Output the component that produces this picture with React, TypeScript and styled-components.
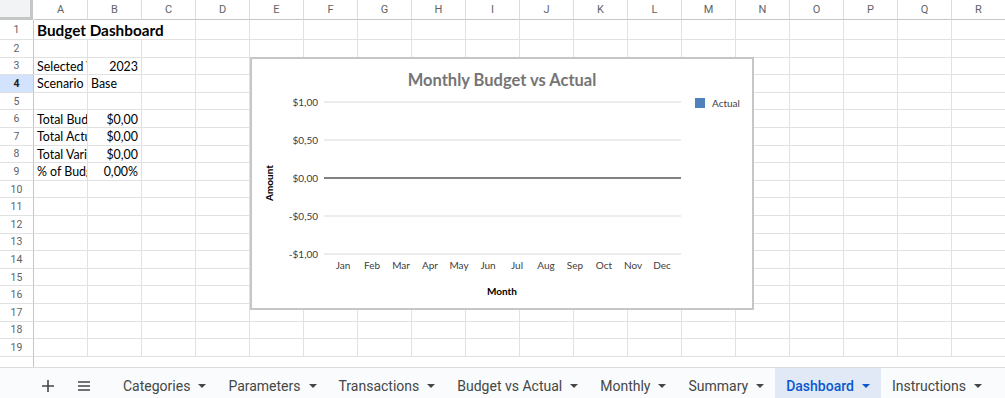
import React from "react";
import styled, { createGlobalStyle, css } from "styled-components";

const GlobalStyle = createGlobalStyle`
  html, body {
    margin: 0;
    padding: 0;
    background: #ffffff;
  }
  body {
    font-family: Roboto, "Liberation Sans", sans-serif;
    overflow: hidden;
  }
`;

const COLS = ["A", "B", "C", "D", "E", "F", "G", "H", "I", "J", "K", "L", "M", "N", "O", "P", "Q", "R"];
const MONTHS = ["Jan", "Feb", "Mar", "Apr", "May", "Jun", "Jul", "Aug", "Sep", "Oct", "Nov", "Dec"];
const TABS = ["Categories", "Parameters", "Transactions", "Budget vs Actual", "Monthly", "Summary", "Dashboard", "Instructions"];

type CellData = { text: string; align?: "left" | "right"; bold?: boolean; span?: number };

// sheet contents, keyed by row then column index
const DATA: Record<number, Record<number, CellData>> = {
  1: { 0: { text: "Budget Dashboard", bold: true, span: 3 } },
  3: { 0: { text: "Selected Year" }, 1: { text: "2023", align: "right" } },
  4: { 0: { text: "Scenario" }, 1: { text: "Base" } },
  6: { 0: { text: "Total Budget" }, 1: { text: "$0,00", align: "right" } },
  7: { 0: { text: "Total Actual" }, 1: { text: "$0,00", align: "right" } },
  8: { 0: { text: "Total Variance" }, 1: { text: "$0,00", align: "right" } },
  9: { 0: { text: "% of Budget" }, 1: { text: "0,00%", align: "right" } },
};

const Page = styled.div`
  display: flex;
  flex-direction: column;
  width: 1005px;
  height: 398px;
  overflow: hidden;
`;

const SheetArea = styled.div`
  position: relative;
  display: flex;
  flex-direction: column;
  height: 368px;
  overflow: hidden;
`;

const Grid = styled.div`
  display: grid;
  grid-template-columns: 34px repeat(18, 54px);
  grid-template-rows: 20px 20px repeat(18, 17.6px);
`;

const Corner = styled.div`
  box-sizing: border-box;
  background: #f1f3f4;
  border-right: 3px solid #c4c7c5;
  border-bottom: 3px solid #c4c7c5;
  margin-right: 1px;
`;

const ColHeader = styled.div`
  box-sizing: border-box;
  display: flex;
  align-items: center;
  justify-content: center;
  font-size: 11px;
  color: #5f6368;
  border-right: 1px solid #dadce0;
  border-bottom: 1px solid #c4c7c5;
  background: #ffffff;
`;

const RowHeader = styled.div<{ $selected?: boolean }>`
  box-sizing: border-box;
  display: flex;
  align-items: center;
  justify-content: center;
  font-size: 10.5px;
  color: #5f6368;
  border-right: 1px solid #c4c7c5;
  border-bottom: 1px solid #e1e1e1;
  ${(p) =>
    p.$selected &&
    css`
      background: #d3e3fd;
      color: #1f1f1f;
      font-weight: 700;
    `}
`;

const Cell = styled.div<{ $align?: string; $bold?: boolean; $span?: number }>`
  box-sizing: border-box;
  display: flex;
  align-items: center;
  justify-content: ${(p) => (p.$align === "right" ? "flex-end" : "flex-start")};
  grid-column: span ${(p) => p.$span || 1};
  padding: 1px 3px 0;
  border-right: 1px solid #e1e1e1;
  border-bottom: 1px solid #e1e1e1;
  font-family: Lato, "Liberation Sans", sans-serif;
  font-size: ${(p) => (p.$bold ? "15.3px" : "12.4px")};
  font-weight: ${(p) => (p.$bold ? 700 : 400)};
  color: #000000;
  white-space: nowrap;
  overflow: hidden;
`;

const Filler = styled.div`
  flex: 1;
  display: flex;
  border-bottom: 1px solid #dadce0;
`;

const FillerGutter = styled.div`
  width: 34px;
  box-sizing: border-box;
  border-right: 1px solid #c4c7c5;
`;

const ChartFrame = styled.div`
  position: absolute;
  left: 250px;
  top: 57px;
  width: 504px;
  height: 253px;
  box-sizing: border-box;
  background: #ffffff;
  border: 2px solid #c6c6c6;
  svg {
    display: block;
    font-family: Lato, "Liberation Sans", sans-serif;
  }
`;

const TabBar = styled.div`
  display: flex;
  align-items: stretch;
  height: 30px;
  box-sizing: border-box;
  padding: 5px 0 0 30px;
  background: #f9fbfd;
`;

const IconButton = styled.div`
  width: 36px;
  display: flex;
  align-items: center;
  justify-content: center;
  color: #444746;
`;

const Tabs = styled.div`
  display: flex;
  margin-left: 10px;
  margin-top: -5px;
`;

const Tab = styled.div<{ $active?: boolean }>`
  display: flex;
  align-items: center;
  gap: 8px;
  padding: 5px 11px 0;
  font-size: 14px;
  font-weight: ${(p) => (p.$active ? 500 : 400)};
  white-space: nowrap;
  color: ${(p) => (p.$active ? "#0b57d0" : "#444746")};
  background: ${(p) => (p.$active ? "#e1e9f7" : "transparent")};
`;

const Caret = styled.span`
  width: 0;
  height: 0;
  border-left: 4px solid transparent;
  border-right: 4px solid transparent;
  border-top: 4px solid currentColor;
`;

const Chart = () => {
  const ticks = ["$1,00", "$0,50", "$0,00", "-$0,50", "-$1,00"];
  return (
    <ChartFrame>
      <svg width="500" height="249" viewBox="0 0 500 249">
        <text x="250" y="21" textAnchor="middle" dominantBaseline="central" fontSize="16.5" fontWeight="700" fill="#757575">
          Monthly Budget vs Actual
        </text>
        {ticks.map((t, i) => {
          const y = 43 + i * 38;
          return (
            <g key={t}>
              <line
                x1="72"
                x2="429"
                y1={y}
                y2={y}
                stroke={i === 2 ? "#595959" : "#d9d9d9"}
                strokeWidth={i === 2 ? 1.5 : 1}
              />
              <text x="66" y={y} textAnchor="end" dominantBaseline="central" fontSize="10" fill="#404040">
                {t}
              </text>
            </g>
          );
        })}
        {MONTHS.map((m, i) => (
          <text key={m} x={91 + i * 29} y="206" textAnchor="middle" dominantBaseline="central" fontSize="10" fill="#404040">
            {m}
          </text>
        ))}
        <text x="250" y="232" textAnchor="middle" dominantBaseline="central" fontSize="10" fontWeight="700" fill="#000">
          Month
        </text>
        <text
          x="17"
          y="124"
          textAnchor="middle"
          dominantBaseline="central"
          fontSize="10"
          fontWeight="700"
          fill="#000"
          transform="rotate(-90 17 124)"
        >
          Amount
        </text>
        <rect x="443" y="39" width="10" height="10" fill="#4f81bd" />
        <text x="460" y="44" dominantBaseline="central" fontSize="10" fill="#404040">
          Actual
        </text>
      </svg>
    </ChartFrame>
  );
};

const App: React.FC = () => {
  const rows = Array.from({ length: 19 }, (_, i) => i + 1);
  return (
    <Page>
      <GlobalStyle />
      <SheetArea>
        <Grid>
          <Corner />
          {COLS.map((c) => (
            <ColHeader key={c}>{c}</ColHeader>
          ))}
          {rows.map((r) => {
            const rowData = DATA[r] || {};
            const cells: React.ReactNode[] = [];
            let col = 0;
            while (col < COLS.length) {
              const d = rowData[col];
              cells.push(
                <Cell key={col} $align={d?.align} $bold={d?.bold} $span={d?.span}>
                  {d?.text}
                </Cell>
              );
              col += d?.span || 1;
            }
            return (
              <React.Fragment key={r}>
                <RowHeader $selected={r === 4}>{r}</RowHeader>
                {cells}
              </React.Fragment>
            );
          })}
        </Grid>
        <Filler>
          <FillerGutter />
        </Filler>
        <Chart />
      </SheetArea>
      <TabBar>
        <IconButton>
          <svg width="14" height="14" viewBox="0 0 14 14">
            <path d="M7 1v12M1 7h12" stroke="currentColor" strokeWidth="1.6" />
          </svg>
        </IconButton>
        <IconButton>
          <svg width="14" height="12" viewBox="0 0 14 12">
            <path d="M1 2h12M1 6h12M1 10h12" stroke="currentColor" strokeWidth="1.6" />
          </svg>
        </IconButton>
        <Tabs>
          {TABS.map((t) => (
            <Tab key={t} $active={t === "Dashboard"}>
              {t}
              <Caret />
            </Tab>
          ))}
        </Tabs>
      </TabBar>
    </Page>
  );
};

export default App;
